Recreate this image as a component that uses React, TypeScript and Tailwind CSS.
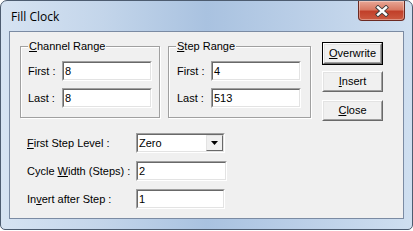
import React from "react";

const font = "font-['Liberation_Sans',Arial,sans-serif]";

function U({ children }: { children: React.ReactNode }) {
  return <span className="underline underline-offset-[1px]">{children}</span>;
}

// classic sunken edit box
function Edit({ value, w }: { value: string; w: string }) {
  return (
    <div className={`${w} h-[20px] border border-t-[#a0a0a0] border-l-[#a0a0a0] border-b-white border-r-white`}>
      <div className="h-full border border-t-[#696969] border-l-[#696969] border-b-[#e3e3e3] border-r-[#e3e3e3] bg-white pl-[1px] text-[11px] leading-[16px] text-black">
        {value}
      </div>
    </div>
  );
}

function Combo({ value }: { value: string }) {
  return (
    <div className="w-[89px] h-[20px] border border-t-[#a0a0a0] border-l-[#a0a0a0] border-b-white border-r-white">
      <div className="h-full flex border border-t-[#696969] border-l-[#696969] border-b-[#e3e3e3] border-r-[#e3e3e3] bg-white">
        <div className="flex-1 pl-[1px] text-[11px] leading-[16px]">{value}</div>
        <div className="w-[17px] h-full border border-t-[#e3e3e3] border-l-[#e3e3e3] border-b-[#696969] border-r-[#696969] bg-[#f0f0f0] flex items-center justify-center">
          <svg width="7" height="4" viewBox="0 0 7 4">
            <path d="M0 0h7L3.5 4z" fill="#000" />
          </svg>
        </div>
      </div>
    </div>
  );
}

function Btn({ children, def }: { children: React.ReactNode; def?: boolean }) {
  return (
    <div className={`w-[61px] ${def ? "h-[23px] border border-black" : "h-[21px]"}`}>
      <div className="h-full border border-t-white border-l-white border-b-[#696969] border-r-[#696969]">
        <div className="h-full border border-t-[#e3e3e3] border-l-[#e3e3e3] border-b-[#a0a0a0] border-r-[#a0a0a0] bg-[#f0f0f0] flex items-center justify-center text-[11px] text-black">
          {children}
        </div>
      </div>
    </div>
  );
}

function Group({ title, w, children }: { title: React.ReactNode; w: string; children: React.ReactNode }) {
  return (
    <div className={`relative ${w} h-[72px] border border-[#a0a0a0] shadow-[1px_1px_0_#fff,inset_1px_1px_0_#fff]`}>
      <span className="absolute left-[7px] -top-[7px] bg-[#f0f0f0] px-[1px] text-[11px] leading-[13px]">{title}</span>
      {children}
    </div>
  );
}

function RangeRows({ first, last, pl }: { first: string; last: string; pl: string }) {
  return (
    <div className={`flex flex-col gap-[7px] pt-[14px] ${pl}`}>
      <div className="flex items-center">
        <span className="w-[34px] text-[11px]">First :</span>
        <Edit value={first} w="w-[90px]" />
      </div>
      <div className="flex items-center">
        <span className="w-[34px] text-[11px]">Last :</span>
        <Edit value={last} w="w-[90px]" />
      </div>
    </div>
  );
}

export default function App() {
  return (
    <div className={`w-[413px] h-[231px] bg-white ${font} text-black`}>
      <div className="w-[413px] h-[230px] rounded-t-[7px] rounded-b-[5px] border border-[#4d5c70] bg-[linear-gradient(90deg,#d6e3f2_0%,#c3d5ea_25%,#a9c2e0_50%,#bcd0e8_75%,#cfdff0_100%)] flex flex-col px-[8px] pb-[10px]">
        {/* title bar */}
        <div className="h-[30px] flex items-start">
          <span className="font-['Open_Sans',sans-serif] text-[12px] leading-[16px] mt-[8px] ml-[2px] text-black">Fill Clock</span>
          <div className="ml-auto mr-[-1px] w-[47px] h-[20px] rounded-b-[4px] border border-t-0 border-[#6b2a22] bg-[linear-gradient(180deg,#e8a796_0%,#d97a64_45%,#c1402a_55%,#cc5a40_100%)] flex items-center justify-center shadow-[inset_0_0_0_1px_rgba(255,255,255,0.35)]">
            <svg width="14" height="12" viewBox="0 0 14 12">
              <path d="M3 2.5L11 9.5M11 2.5L3 9.5" stroke="#3b3b3b" strokeWidth="4.2" strokeLinecap="square" />
              <path d="M3 2.5L11 9.5M11 2.5L3 9.5" stroke="#fff" strokeWidth="2.4" strokeLinecap="square" />
            </svg>
          </div>
        </div>
        {/* client area */}
        <div className="flex-1 border border-[#7b8ba3] bg-[#f0f0f0] text-[11px]">
          <div className="flex pl-[10px] pt-[10px]">
            <div className="mt-[4px]">
              <Group title={<><U>C</U>hannel Range</>} w="w-[140px]">
                <RangeRows first="8" last="8" pl="pl-[7px]" />
              </Group>
            </div>
            <div className="mt-[4px] ml-[8px]">
              <Group title={<><U>S</U>tep Range</>} w="w-[143px]">
                <RangeRows first="4" last="513" pl="pl-[8px]" />
              </Group>
            </div>
            <div className="ml-[11px] flex flex-col gap-[6px]">
              <Btn def>
                <U>O</U>verwrite
              </Btn>
              <div className="flex flex-col gap-[8px]">
                <Btn>
                  <U>I</U>nsert
                </Btn>
                <Btn>
                  <U>C</U>lose
                </Btn>
              </div>
            </div>
          </div>
          <div className="flex flex-col gap-[8px] pl-[17px] mt-[12px]">
            <div className="flex items-center">
              <span className="w-[109px]">
                <U>F</U>irst Step Level :
              </span>
              <Combo value="Zero" />
            </div>
            <div className="flex items-center">
              <span className="w-[109px]">
                Cycle <U>W</U>idth (Steps) :
              </span>
              <Edit value="2" w="w-[91px]" />
            </div>
            <div className="flex items-center">
              <span className="w-[109px]">
                In<U>v</U>ert after Step :
              </span>
              <Edit value="1" w="w-[89px]" />
            </div>
          </div>
        </div>
      </div>
    </div>
  );
}
